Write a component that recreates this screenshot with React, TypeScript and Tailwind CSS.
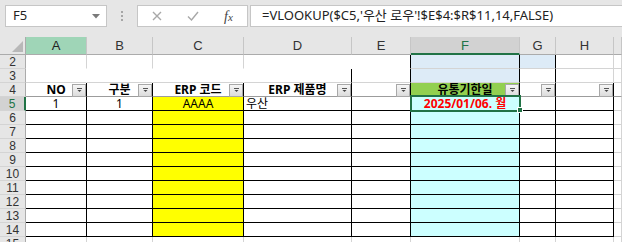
import clsx from "clsx";

type Edge = "g" | "k" | "w" | "f";

const rightCls: Record<Edge, string> = {
  g: "border-r-[#d4d4d4]",
  k: "border-r-black",
  w: "border-r-transparent",
  f: "border-r-[#9c9c9c]",
};

const bottomCls: Record<Edge, string> = {
  g: "border-b-[#d4d4d4]",
  k: "border-b-black",
  w: "border-b-transparent",
  f: "border-b-[#9c9c9c]",
};

const FONT = "font-['Noto_Sans','Noto_Sans_CJK_KR',sans-serif]";

type CellSpec = {
  r: Edge;
  b: Edge;
  bg?: string;
  content?: React.ReactNode;
  filter?: boolean;
  selected?: boolean;
};

function FilterButton() {
  return (
    <div className="absolute right-0 top-[1px] flex h-[13px] w-[14px] items-center justify-center border border-[#a8a8a8] bg-gradient-to-b from-[#f6f6f6] to-[#dcdcdc]">
      <svg width="7" height="5" viewBox="0 0 7 5">
        <path d="M1 0.5h5" stroke="#555" strokeWidth="1" />
        <path d="M1.5 2h4l-2 2z" fill="#444" />
      </svg>
    </div>
  );
}

function Cell({ spec }: { spec: CellSpec }) {
  return (
    <div
      className={clsx(
        "relative flex items-center border-r border-b text-[12px] leading-none text-black",
        rightCls[spec.r],
        bottomCls[spec.b],
        spec.bg ?? "bg-white",
        spec.selected && "z-10",
      )}
    >
      {spec.content}
      {spec.filter && <FilterButton />}
      {spec.selected && (
        <>
          <div className="pointer-events-none absolute -left-[1px] -top-[2px] h-[17px] w-[111px] border-2 border-[#217346]" />
          <div className="absolute left-[106px] top-[10px] h-[6px] w-[6px] border border-white bg-[#217346]" />
        </>
      )}
    </div>
  );
}

function RowHead({ n, active }: { n: number; active?: boolean }) {
  return (
    <div
      className={clsx(
        "flex items-center justify-center border-b border-b-[#d4d4d4] font-['Liberation_Sans',sans-serif] text-[12px] leading-[12px]",
        active
          ? "border-r-2 border-r-[#217346] bg-[#d2d2d2] text-[#217346]"
          : "border-r border-r-[#ababab] bg-[#e6e6e6] text-[#333]",
      )}
    >
      {n}
    </div>
  );
}

const center = (node: React.ReactNode, extra?: string) => (
  <span className={clsx("w-full text-center", extra)}>{node}</span>
);

function buildRows(): CellSpec[][] {
  const rows: CellSpec[][] = [];
  // row 2
  rows.push([
    { r: "g", b: "w" },
    { r: "g", b: "w" },
    { r: "g", b: "w" },
    { r: "w", b: "w" },
    { r: "k", b: "w" },
    { r: "k", b: "g", bg: "bg-[#ddebf7]" },
    { r: "k", b: "g", bg: "bg-[#ddebf7]" },
    { r: "g", b: "g" },
    { r: "g", b: "g" },
  ]);
  // row 3
  rows.push([
    { r: "w", b: "g" },
    { r: "w", b: "g" },
    { r: "w", b: "g" },
    { r: "k", b: "g" },
    { r: "k", b: "g" },
    { r: "k", b: "g", bg: "bg-[#ddebf7]" },
    { r: "k", b: "g" },
    { r: "g", b: "g" },
    { r: "g", b: "g" },
  ]);
  // row 4 - header with filters
  const head = (t?: string): React.ReactNode => (t ? center(t, "font-bold") : undefined);
  rows.push([
    { r: "k", b: "f", filter: true, content: head("NO") },
    { r: "k", b: "f", filter: true, content: head("구분") },
    { r: "k", b: "f", filter: true, content: head("ERP 코드") },
    { r: "k", b: "f", filter: true, content: head("ERP 제품명") },
    { r: "k", b: "f", filter: true },
    { r: "k", b: "f", filter: true, bg: "bg-[#92d050]", content: head("유통기한일") },
    { r: "k", b: "f", filter: true },
    { r: "k", b: "f", filter: true },
    { r: "g", b: "f" },
  ]);
  // rows 5..14
  for (let i = 5; i <= 14; i++) {
    const first = i === 5;
    rows.push([
      { r: "k", b: "k", content: first ? center("1") : undefined },
      { r: "k", b: "k", content: first ? center("1") : undefined },
      { r: "k", b: "k", bg: "bg-[#ffff00]", content: first ? center("AAAA", "underline underline-offset-2") : undefined },
      { r: "k", b: "k", content: first ? <span className="pl-[2px]">우산</span> : undefined },
      { r: "k", b: "k" },
      {
        r: "k",
        b: "k",
        bg: "bg-[#ccffff]",
        selected: first,
        content: first ? center("2025/01/06. 월", "font-bold text-[#ff0000]") : undefined,
      },
      { r: "k", b: "k" },
      { r: "k", b: "k" },
      { r: "g", b: "g" },
    ]);
  }
  // row 15
  rows.push(Array.from({ length: 9 }, () => ({ r: "g" as Edge, b: "g" as Edge })));
  return rows;
}

const letters = ["A", "B", "C", "D", "E", "F", "G", "H", ""];

export default function App() {
  const rows = buildRows();
  return (
    <div className={clsx("h-[242px] w-[622px] overflow-hidden bg-white", FONT)}>
      {/* formula bar */}
      <div className="flex h-[37px] items-start bg-[#e6e6e6] pl-[5px] pt-[5px]">
        <div className="flex h-[22px] w-[102px] items-center justify-between border border-[#c6c6c6] bg-white pl-[7px] pr-[6px] text-[13px] text-[#222]">
          <span>F5</span>
          <svg width="8" height="5" viewBox="0 0 8 5">
            <path d="M0 0h8L4 4.5z" fill="#7a7a7a" />
          </svg>
        </div>
        <div className="flex h-[22px] w-[30px] flex-col items-center justify-center gap-[2px]">
          <span className="h-[2px] w-[2px] bg-[#a6a6a6]" />
          <span className="h-[2px] w-[2px] bg-[#a6a6a6]" />
          <span className="h-[2px] w-[2px] bg-[#a6a6a6]" />
        </div>
        <div className="flex h-[22px] w-[111px] items-center border border-[#c6c6c6] bg-white">
          <svg className="ml-[14px]" width="10" height="10" viewBox="0 0 10 10">
            <path d="M1 1l8 8M9 1l-8 8" stroke="#a8a8a8" strokeWidth="1.4" />
          </svg>
          <svg className="ml-[25px]" width="12" height="10" viewBox="0 0 12 10">
            <path d="M1 5.5l3.5 3.5L11 1" stroke="#a8a8a8" strokeWidth="1.4" fill="none" />
          </svg>
          <span className="ml-[25px] font-['Liberation_Serif',serif] text-[14px] italic text-[#444]">
            f<span className="text-[11px]">x</span>
          </span>
        </div>
        <div className="ml-[2px] flex h-[22px] flex-1 items-center border border-r-0 border-[#c6c6c6] bg-white pl-[11px] text-[13px] text-[#222]">
          =VLOOKUP($C5,'우산 로우'!$E$4:$R$11,14,FALSE)
        </div>
      </div>

      {/* sheet */}
      <div className="grid h-[205px] grid-cols-[26px_61px_66px_91px_108px_59px_109px_36px_58px_1fr] grid-rows-[18px_repeat(14,14px)] overflow-hidden">
        <div className="flex items-end justify-end border-r border-b border-r-[#ababab] border-b-[#ababab] bg-[#e6e6e6] pb-[2px] pr-[2px]">
          <svg width="11" height="11" viewBox="0 0 11 11">
            <path d="M11 0v11H0z" fill="#b8b8b8" />
          </svg>
        </div>
        {letters.map((l) => (
          <div
            key={l || "i"}
            className={clsx(
              "flex items-center justify-center border-r border-r-[#c6c6c6] font-['Liberation_Sans',sans-serif] text-[13px] leading-[13px]",
              l === "A" && "border-b border-b-[#ababab] bg-[#9fd5b7] text-[#222]",
              l === "F" && "border-b-2 border-b-[#217346] bg-[#d2d2d2] text-[#217346]",
              l !== "A" && l !== "F" && "border-b border-b-[#ababab] bg-[#e6e6e6] text-[#333]",
            )}
          >
            {l}
          </div>
        ))}
        {rows.map((row, i) => (
          <div key={i} className="contents">
            <RowHead n={i + 2} active={i + 2 === 5} />
            {row.map((spec, j) => (
              <Cell key={j} spec={spec} />
            ))}
          </div>
        ))}
      </div>
    </div>
  );
}
